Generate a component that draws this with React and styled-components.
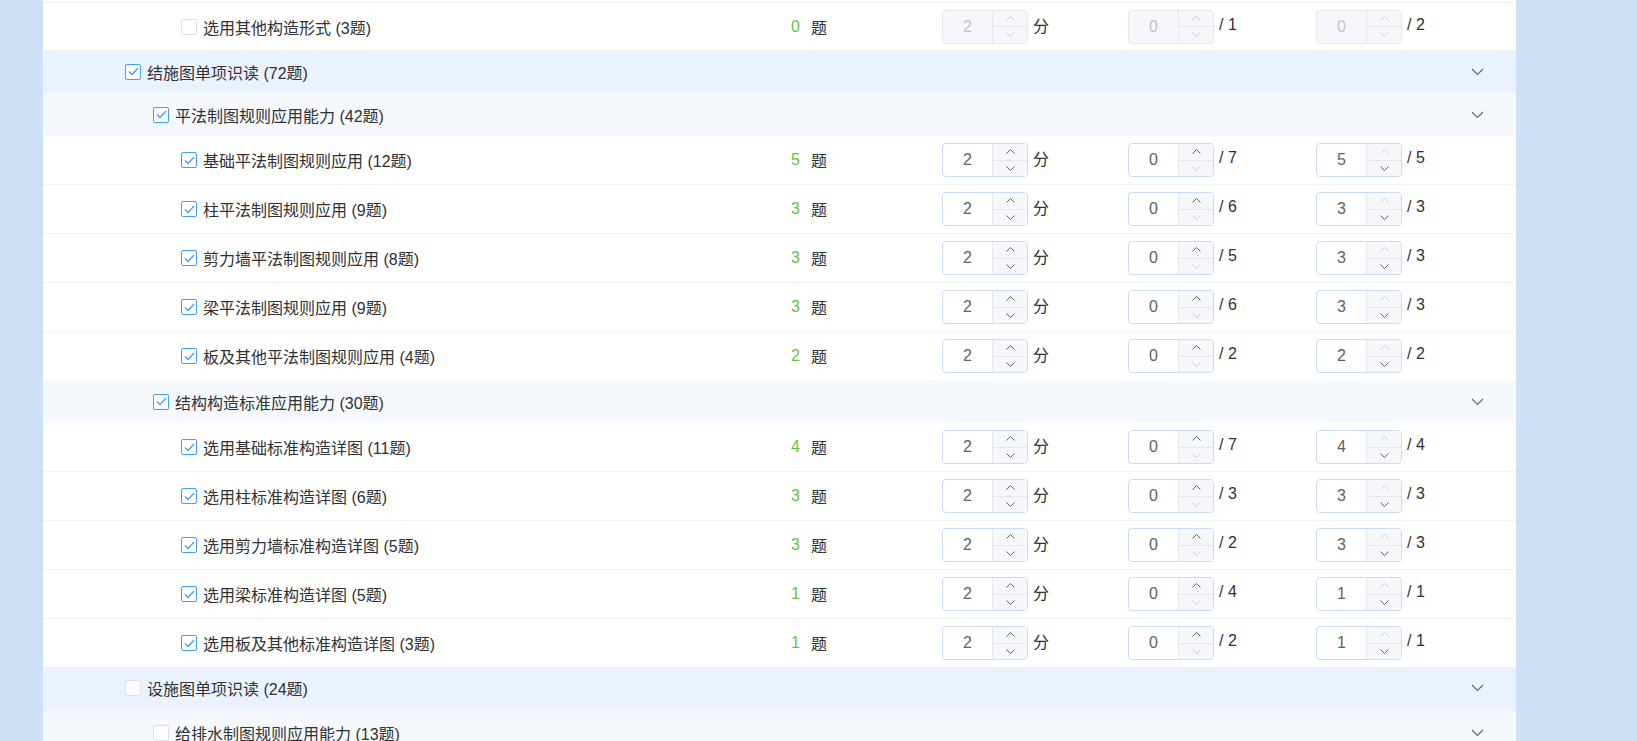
import React from 'react';
import styled, { createGlobalStyle } from 'styled-components';

const GlobalStyle = createGlobalStyle`
  *, *::before, *::after { box-sizing: border-box; }
  html, body { margin: 0; padding: 0; }
  body {
    background: #cde0f8;
    font-family: "Liberation Sans", "Noto Sans CJK SC", sans-serif;
    overflow: hidden;
  }
`;

const Page = styled.div`
  display: flex;
  height: 741px;
  padding: 0 121px 0 43px;
  background: #cde0f8;
`;

const Panel = styled.div`
  flex: 1;
  background: #fff;
  overflow: hidden;
`;

const TopEdge = styled.div`
  height: 3px;
  border-bottom: 1px solid #edf2f9;
`;

const GroupRow = styled.div`
  display: flex;
  align-items: center;
  height: ${p => (p.$divider ? 44 : 43)}px;
  padding: 0 32px 0 ${p => 82 + (p.$level - 1) * 28}px;
  background: ${p => (p.$level === 1 ? '#eaf2fd' : '#f5f9fe')};
  border-bottom: ${p => (p.$divider ? '2px solid #eef2f7' : 'none')};
`;

const LeafRow = styled.div`
  display: grid;
  grid-template-columns: 748px 151px 186px 188px 1fr;
  align-items: center;
  height: ${p => (p.$partial ? 47 : p.$last ? 48 : 49)}px;
  border-bottom: ${p => (p.$last || p.$partial ? 'none' : '1px solid #eef3fa')};
`;

const Label = styled.label`
  display: flex;
  align-items: center;
  gap: 6px;
  font-size: 16px;
  color: #303133;
  white-space: nowrap;
`;

const NameCell = styled.div`
  padding-left: 138px;
`;

const Box = styled.span`
  width: 16px;
  height: 16px;
  border: 1px solid ${p => (p.$checked ? '#409eff' : '#dcdfe6')};
  border-radius: 2px;
  background: #fff;
  display: flex;
  align-items: center;
  justify-content: center;
  flex-shrink: 0;
`;

const CountCell = styled.div`
  display: flex;
  align-items: center;
  font-size: 16px;
  color: #303133;
`;

const Num = styled.span`
  color: #67c23a;
  margin-right: 11px;
`;

const Field = styled.div`
  display: flex;
  align-items: center;
`;

const Stepper = styled.div`
  display: flex;
  width: 86px;
  height: 34px;
  border: 1px solid ${p => (p.$disabled ? '#e4e7ed' : '#c9dbf5')};
  border-radius: 4px;
  background: ${p => (p.$disabled ? '#f5f7fa' : '#fff')};
  overflow: hidden;
`;

const Value = styled.div`
  flex: 1;
  display: flex;
  align-items: center;
  justify-content: center;
  font-size: 16px;
  color: ${p => (p.$disabled ? '#c0c4cc' : '#606266')};
`;

const Arrows = styled.div`
  width: 35px;
  display: flex;
  flex-direction: column;
  border-left: 1px solid #e4e7ed;
  background: #f5f7fa;
`;

const ArrowBtn = styled.div`
  flex: 1;
  display: flex;
  align-items: center;
  justify-content: center;
  color: ${p => (p.$off ? '#c8ccd4' : '#606266')};
  & + & {
    border-top: 1px solid #e4e7ed;
  }
`;

const Unit = styled.span`
  margin-left: 5px;
  padding-bottom: 4px;
  font-size: 16px;
  color: #303133;
  white-space: nowrap;
`;

const Chevron = styled.svg`
  margin-left: auto;
  flex-shrink: 0;
`;

const Check = ({ checked }) => (
  <Box $checked={checked}>
    {checked && (
      <svg width="11" height="9" viewBox="0 0 11 9">
        <polyline points="1,4.5 4,7.5 10,1" fill="none" stroke="#409eff" strokeWidth="1.3" />
      </svg>
    )}
  </Box>
);

const Caret = ({ up }) => (
  <svg width="9" height="5" viewBox="0 0 9 5">
    <polyline
      points={up ? '0.5,4.5 4.5,0.5 8.5,4.5' : '0.5,0.5 4.5,4.5 8.5,0.5'}
      fill="none"
      stroke="currentColor"
      strokeWidth="1"
    />
  </svg>
);

const NumberInput = ({ value, max, min = 0, disabled, unit }) => (
  <Field>
    <Stepper $disabled={disabled}>
      <Value $disabled={disabled}>{value}</Value>
      <Arrows>
        <ArrowBtn $off={disabled || (max !== undefined && value >= max)}>
          <Caret up />
        </ArrowBtn>
        <ArrowBtn $off={disabled || (min !== undefined && value <= min && unit !== '分')}>
          <Caret />
        </ArrowBtn>
      </Arrows>
    </Stepper>
    <Unit>{unit}</Unit>
  </Field>
);

const Leaf = ({ item, last, partial }) => (
  <LeafRow $last={last} $partial={partial}>
    <NameCell>
      <Label>
        <Check checked={item.checked} />
        {item.name}
      </Label>
    </NameCell>
    <CountCell>
      <Num>{item.count}</Num>题
    </CountCell>
    <NumberInput value={2} disabled={!item.checked} unit="分" />
    <NumberInput value={0} max={item.total} disabled={!item.checked} unit={`/ ${item.total}`} />
    <NumberInput value={item.count} max={item.pick} disabled={!item.checked} unit={`/ ${item.pick}`} />
  </LeafRow>
);

const Group = ({ level, name, checked, divider }) => (
  <GroupRow $level={level} $divider={divider}>
    <Label>
      <Check checked={checked} />
      {name}
    </Label>
    <Chevron width="13" height="8" viewBox="0 0 13 8">
      <polyline points="1,1 6.5,6.5 12,1" fill="none" stroke="#606266" strokeWidth="1.1" />
    </Chevron>
  </GroupRow>
);

const pingfa = [
  { name: '基础平法制图规则应用 (12题)', count: 5, total: 7, pick: 5, checked: true },
  { name: '柱平法制图规则应用 (9题)', count: 3, total: 6, pick: 3, checked: true },
  { name: '剪力墙平法制图规则应用 (8题)', count: 3, total: 5, pick: 3, checked: true },
  { name: '梁平法制图规则应用 (9题)', count: 3, total: 6, pick: 3, checked: true },
  { name: '板及其他平法制图规则应用 (4题)', count: 2, total: 2, pick: 2, checked: true },
];

const gouzao = [
  { name: '选用基础标准构造详图 (11题)', count: 4, total: 7, pick: 4, checked: true },
  { name: '选用柱标准构造详图 (6题)', count: 3, total: 3, pick: 3, checked: true },
  { name: '选用剪力墙标准构造详图 (5题)', count: 3, total: 2, pick: 3, checked: true },
  { name: '选用梁标准构造详图 (5题)', count: 1, total: 4, pick: 1, checked: true },
  { name: '选用板及其他标准构造详图 (3题)', count: 1, total: 2, pick: 1, checked: true },
];

const other = { name: '选用其他构造形式 (3题)', count: 0, total: 1, pick: 2, checked: false };

export default function App() {
  return (
    <>
      <GlobalStyle />
      <Page>
        <Panel>
          <TopEdge />
          <Leaf item={other} partial />
          <Group level={1} name="结施图单项识读 (72题)" checked />
          <Group level={2} name="平法制图规则应用能力 (42题)" checked />
          {pingfa.map((it, i) => (
            <Leaf key={it.name} item={it} last={i === pingfa.length - 1} />
          ))}
          <Group level={2} name="结构构造标准应用能力 (30题)" checked />
          {gouzao.map((it, i) => (
            <Leaf key={it.name} item={it} last={i === gouzao.length - 1} />
          ))}
          <Group level={1} name="设施图单项识读 (24题)" divider />
          <Group level={2} name="给排水制图规则应用能力 (13题)" />
        </Panel>
      </Page>
    </>
  );
}
